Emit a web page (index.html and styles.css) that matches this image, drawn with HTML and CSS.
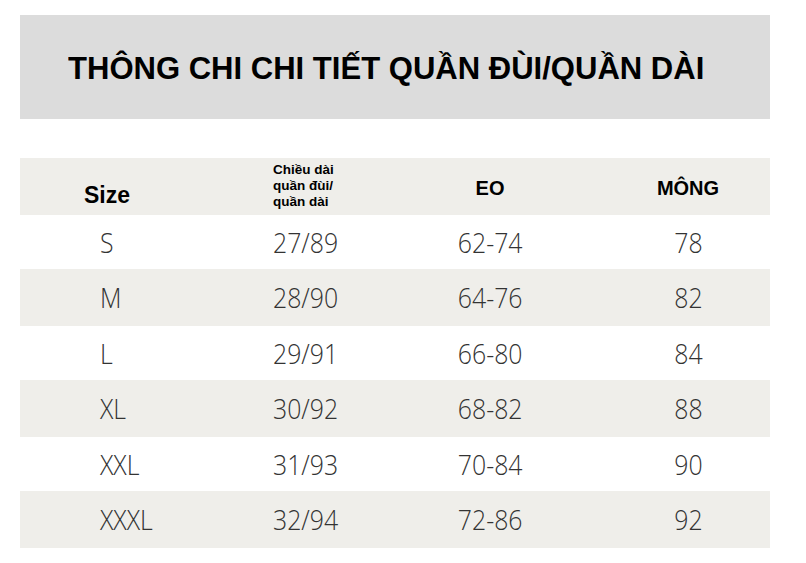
FILE: index.html
```html
<!DOCTYPE html>
<html lang="vi">
<head>
<meta charset="utf-8">
<link rel="stylesheet" href="styles.css">
</head>
<body>
<div class="page">
  <div class="banner"><h1 class="title">THÔNG CHI CHI TIẾT QUẦN ĐÙI/QUẦN DÀI</h1></div>
  <div class="table">
    <div class="row head">
      <div class="c1"><span class="size-h">Size</span></div>
      <div class="c2"><span class="len-h">Chiều dài<br>quần đùi/<br>quần dài</span></div>
      <div class="c3"><span class="col-h">EO</span></div>
      <div class="c4"><span class="col-h">MÔNG</span></div>
    </div>
    <div class="row"><div class="c1"><span class="v">S</span></div><div class="c2"><span class="v">27/89</span></div><div class="c3"><span class="v">62-74</span></div><div class="c4"><span class="v">78</span></div></div>
    <div class="row alt"><div class="c1"><span class="v">M</span></div><div class="c2"><span class="v">28/90</span></div><div class="c3"><span class="v">64-76</span></div><div class="c4"><span class="v">82</span></div></div>
    <div class="row"><div class="c1"><span class="v">L</span></div><div class="c2"><span class="v">29/91</span></div><div class="c3"><span class="v">66-80</span></div><div class="c4"><span class="v">84</span></div></div>
    <div class="row alt"><div class="c1"><span class="v">XL</span></div><div class="c2"><span class="v">30/92</span></div><div class="c3"><span class="v">68-82</span></div><div class="c4"><span class="v">88</span></div></div>
    <div class="row"><div class="c1"><span class="v">XXL</span></div><div class="c2"><span class="v">31/93</span></div><div class="c3"><span class="v">70-84</span></div><div class="c4"><span class="v">90</span></div></div>
    <div class="row alt"><div class="c1"><span class="v">XXXL</span></div><div class="c2"><span class="v">32/94</span></div><div class="c3"><span class="v">72-86</span></div><div class="c4"><span class="v">92</span></div></div>
  </div>
</div>
</body>
</html>
```
FILE: styles.css
```css
html, body { margin: 0; padding: 0; background: #fff; }
.page { width: 806px; height: 563px; padding: 15px 36px 0 20px; box-sizing: border-box; font-family: "Liberation Sans", Arial, sans-serif; }
.banner { height: 104px; background: #dcdcdc; display: flex; align-items: center; padding-left: 48px; }
.title { margin: 0; font-size: 32px; font-weight: bold; color: #000; letter-spacing: 0; transform: scaleX(0.97); transform-origin: left center; white-space: nowrap; padding-top: 2px; }
.table { margin-top: 39px; }
.row { display: grid; grid-template-columns: 233px 121px 232px 164px; height: 54px; align-items: center; }
.row.alt { background: #efeeea; height: 57px; }
.row.head { background: #efeeea; height: 57px; }
.c1 { padding-left: 80px; }
.c2 { padding-left: 20px; }
.c3, .c4 { text-align: center; }
.head .c1 { padding-left: 64px; padding-top: 18px; }
.size-h { font-size: 23px; font-weight: bold; color: #000; }
.len-h { display: block; font-size: 13.5px; font-weight: bold; line-height: 16px; color: #000; padding-bottom: 2px; }
.col-h { font-size: 20px; font-weight: bold; color: #000; }
.head .c3, .head .c4 { padding-top: 4px; }
.v { display: inline-block; font-family: "Open Sans", sans-serif; font-weight: 300; font-size: 27px; color: #333; transform: scaleX(0.92); transform-origin: left center; }
.c3 .v, .c4 .v { transform-origin: center; }
```
